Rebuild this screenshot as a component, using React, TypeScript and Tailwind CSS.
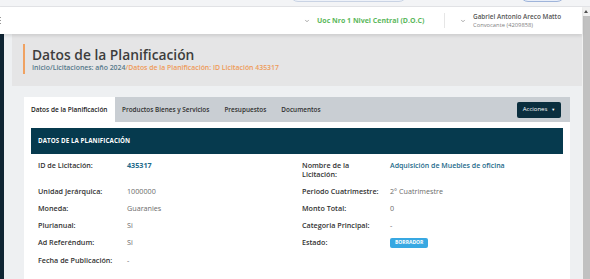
import { ChevronDown } from 'lucide-react';

const ROWS = [
    { l: 'ID de Licitación:', v: '435317', lk: true, r: 'Nombre de la Licitación:', rv: 'Adquisición de Muebles de oficina', rk: true },
    { l: 'Unidad Jerárquica:', v: '1000000', r: 'Periodo Cuatrimestre:', rv: '2° Cuatrimestre' },
    { l: 'Moneda:', v: 'Guaranies', r: 'Monto Total:', rv: '0' },
    { l: 'Plurianual:', v: 'Si', r: 'Categoria Principal:', rv: '-' },
    { l: 'Ad Referéndum:', v: 'Si', r: 'Estado:', rv: 'BORRADOR', badge: true },
    { l: 'Fecha de Publicación:', v: '-' },
];

const TABS = ['Datos de la Planificación', 'Productos Bienes y Servicios', 'Presupuestos', 'Documentos'];

export default function App() {
    return (
        <div className="w-[590px] h-[279px] overflow-hidden bg-white flex flex-col font-['Open_Sans',sans-serif]">
            {/* browser strip */}
            <div className="h-[7px] shrink-0 bg-[#f3f4f6] border-b border-[#e2e3e6] flex overflow-hidden">
                <div className="ml-[290px] -mt-[10px] w-[117px] h-[12px] rounded-b-[8px] border border-[#c9d3e4] bg-[#eef2f9]" />
                <div className="ml-[113px] -mt-[10px] w-[45px] h-[12px] rounded-b-[8px] border border-[#9fb4da] bg-[#e8eef9]" />
            </div>

            <div className="flex flex-1 min-h-0">
                <div className="flex-1 flex flex-col min-w-0">
                    {/* header */}
                    <header className="h-[27px] shrink-0 bg-white flex items-center relative z-10 shadow-[0_2px_3px_rgba(0,0,0,0.10)]">
                        <div className="flex flex-col gap-[2px] w-[2px] self-center">
                            <span className="w-[1px] h-[1px] bg-[#999]" />
                            <span className="w-[1px] h-[1px] bg-[#999]" />
                            <span className="w-[1px] h-[1px] bg-[#999]" />
                        </div>
                        <div className="ml-[302px] flex items-center">
                            <ChevronDown className="w-[6px] h-[6px] text-[#777]" strokeWidth={2.5} />
                            <span className="ml-[7px] text-[7px] font-bold text-[#5cb85c] leading-none">
                                Uoc Nro 1 Nivel Central (D.O.C)
                            </span>
                        </div>
                        <div className="ml-auto flex items-center w-[138px]">
                            <span className="w-[1px] h-[15px] bg-[#e6e6e6]" />
                            <ChevronDown className="ml-[15px] w-[6px] h-[6px] text-[#777]" strokeWidth={2.5} />
                            <div className="ml-[7px] flex flex-col">
                                <span className="text-[6.4px] font-semibold text-[#555] leading-[9px]">Gabriel Antonio Areco Matto</span>
                                <span className="text-[5.8px] text-[#808080] leading-[9px]">Convocante (4209858)</span>
                            </div>
                        </div>
                    </header>

                    <div className="flex flex-1 min-h-0">
                        <aside className="w-[4px] shrink-0 bg-[#0f2533]" />
                        <main className="flex-1 bg-[#eef0f2] pl-[8px] flex flex-col min-w-0">
                            {/* title band */}
                            <div className="h-[52px] shrink-0 bg-[#e5e5e6] pl-[11px] pt-[10px]">
                                <div className="border-l-2 border-[#f0a262] pl-[7px] h-[30px] pt-[3px]">
                                    <h1 className="text-[13.8px] font-semibold text-[#3d3d3d] leading-[16px]">
                                        Datos de la Planificación
                                    </h1>
                                    <p className="text-[6.9px] font-semibold leading-[10px]">
                                        <span className="text-[#56798a]">Inicio/Licitaciones: año 2024</span>
                                        <span className="text-[#ee9a58]">/Datos de la Planificación: ID Licitación 435317</span>
                                    </p>
                                </div>
                            </div>

                            {/* card */}
                            <div className="mx-[12px] mt-[11px] flex flex-col">
                                <div className="h-[25px] bg-[#c9ced3] flex items-center">
                                    {TABS.map((t, i) => (
                                        <div
                                            key={t}
                                            className={
                                                i === 0
                                                    ? 'h-full flex items-center px-[7px] bg-white text-[6.5px] font-semibold text-[#222]'
                                                    : 'h-full flex items-center px-[7.5px] text-[6.4px] font-semibold text-[#2f2f2f]'
                                            }
                                        >
                                            {t}
                                        </div>
                                    ))}
                                    <button className="ml-auto mr-[9px] h-[16px] w-[44px] rounded-[2px] bg-[#0a2e3e] text-white text-[6px] flex items-center justify-center gap-[4px]">
                                        Acciones <span className="text-[4px]">▼</span>
                                    </button>
                                </div>

                                <div className="bg-white px-[7px] pt-[6px] h-[200px]">
                                    <div className="h-[26px] bg-[#063a4e] flex items-center pl-[7px]">
                                        <span className="text-[6.2px] font-bold text-white tracking-[0.1px]">DATOS DE LA PLANIFICACIÓN</span>
                                    </div>
                                    <div className="pl-[7px] pt-[7px]">
                                        {ROWS.map((row) => (
                                            <div key={row.l} className="flex items-start pb-[8px]">
                                                <div className="w-[264px] flex items-start">
                                                    <span className="w-[89px] text-[7.2px] font-semibold text-[#333] leading-[9px]">{row.l}</span>
                                                    <span
                                                        className={
                                                            row.lk
                                                                ? 'text-[7.2px] font-bold text-[#1d6a8a] leading-[9px]'
                                                                : 'text-[7.2px] text-[#6b6b6b] leading-[9px]'
                                                        }
                                                    >
                                                        {row.v}
                                                    </span>
                                                </div>
                                                {row.r && (
                                                    <div className="flex items-start">
                                                        <span className="w-[88px] text-[7.2px] font-semibold text-[#333] leading-[9px]">
                                                            {row.r === 'Nombre de la Licitación:' ? (
                                                                <>
                                                                    Nombre de la
                                                                    <br />
                                                                    Licitación:
                                                                </>
                                                            ) : (
                                                                row.r
                                                            )}
                                                        </span>
                                                        {row.badge ? (
                                                            <span className="h-[10px] px-[5px] rounded-[2px] bg-[#38a8e2] text-white text-[5px] font-bold flex items-center">
                                                                {row.rv}
                                                            </span>
                                                        ) : (
                                                            <span
                                                                className={
                                                                    row.rk
                                                                        ? 'text-[7px] font-semibold text-[#1d6a8a] leading-[9px]'
                                                                        : 'text-[7.2px] text-[#6b6b6b] leading-[9px]'
                                                                }
                                                            >
                                                                {row.rv}
                                                            </span>
                                                        )}
                                                    </div>
                                                )}
                                            </div>
                                        ))}
                                    </div>
                                </div>
                            </div>
                        </main>
                    </div>
                </div>

                {/* scrollbar */}
                <div className="w-[8px] shrink-0 bg-[#f1f1f1] flex flex-col items-center">
                    <div className="h-[9px] flex items-center justify-center">
                        <span className="w-0 h-0 border-l-[2.5px] border-r-[2.5px] border-b-[3px] border-l-transparent border-r-transparent border-b-[#505050]" />
                    </div>
                    <div className="w-[7px] flex-1 bg-[#c1c1c1]" />
                </div>
            </div>
        </div>
    );
}
